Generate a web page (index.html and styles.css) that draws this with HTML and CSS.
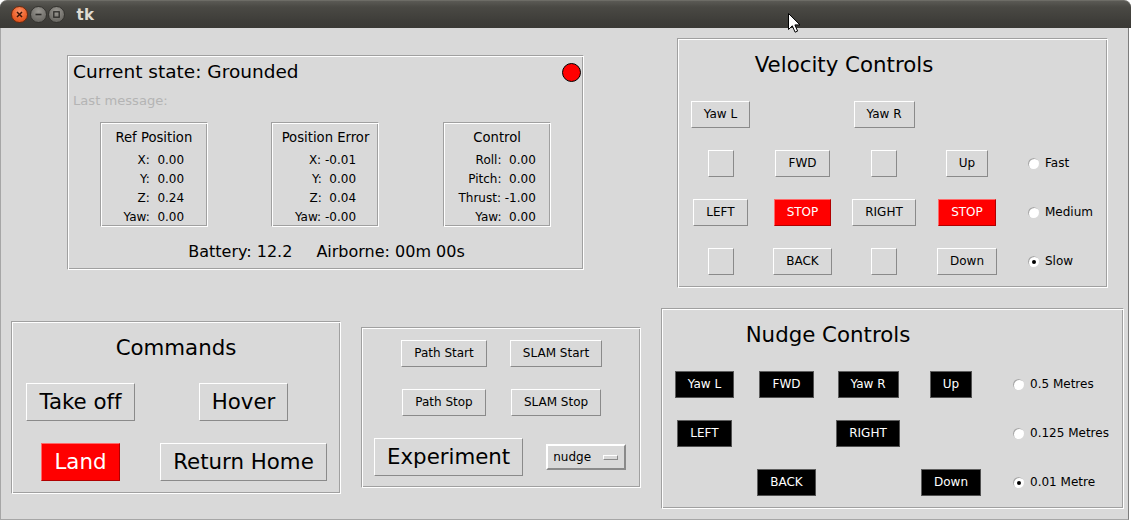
FILE: index.html
```html
<!DOCTYPE html>
<html>
<head>
<meta charset="utf-8">
<title>tk</title>
<link rel="stylesheet" href="styles.css">
</head>
<body>
<div class="titlebar">
  <div class="wbtn close"><svg width="9" height="9" viewBox="0 0 9 9"><path d="M2 2 L7 7 M7 2 L2 7" stroke="#3b1608" stroke-width="1.5" fill="none"/></svg></div>
  <div class="wbtn min"><svg width="9" height="9" viewBox="0 0 9 9"><path d="M1.5 4.5 H7.5" stroke="#2c2b28" stroke-width="1.6" fill="none"/></svg></div>
  <div class="wbtn max"><svg width="9" height="9" viewBox="0 0 9 9"><rect x="1.8" y="1.8" width="5.4" height="5.4" stroke="#2c2b28" stroke-width="1.3" fill="none"/></svg></div>
  <span class="title">tk</span>
</div>
<div class="window">
  <div class="left">
    <div class="frame state">
      <div class="state-head"><span class="state-text">Current state: Grounded</span><span class="dot"></span></div>
      <div class="lastmsg">Last message:</div>
      <div class="subs">
        <div class="frame sub">
          <div class="sub-title">Ref Position</div>
          <div class="rows"><div>X:  0.00</div><div>Y:  0.00</div><div>Z:  0.24</div><div>Yaw:  0.00</div></div>
        </div>
        <div class="frame sub">
          <div class="sub-title">Position Error</div>
          <div class="rows"><div>X: -0.01</div><div>Y:  0.00</div><div>Z:  0.04</div><div>Yaw: -0.00</div></div>
        </div>
        <div class="frame sub">
          <div class="sub-title">Control</div>
          <div class="rows"><div>Roll:  0.00</div><div>Pitch:  0.00</div><div>Thrust: -1.00</div><div>Yaw:  0.00</div></div>
        </div>
      </div>
      <div class="battery"><span>Battery: 12.2</span><span>Airborne: 00m 00s</span></div>
    </div>
    <div class="bottom-row">
      <div class="frame commands">
        <div class="cmd-title">Commands</div>
        <button class="btn big">Take off</button>
        <button class="btn big">Hover</button>
        <button class="btn big red">Land</button>
        <button class="btn big">Return Home</button>
      </div>
      <div class="frame path">
        <div class="path-grid">
          <button class="btn">Path Start</button>
          <button class="btn">SLAM Start</button>
          <button class="btn">Path Stop</button>
          <button class="btn">SLAM Stop</button>
        </div>
        <div class="path-row">
          <button class="btn big">Experiment</button>
          <div class="optmenu"><span>nudge</span><span class="optind"></span></div>
        </div>
      </div>
    </div>
  </div>
  <div class="right">
    <div class="frame ctrl velocity">
      <div class="ctrl-title">Velocity Controls</div><span></span>
      <button class="btn">Yaw L</button><span></span><button class="btn">Yaw R</button><span></span><span></span>
      <button class="btn empty"></button><button class="btn">FWD</button><button class="btn empty"></button><button class="btn">Up</button>
      <div class="radio"><span class="ind"></span>Fast</div>
      <button class="btn">LEFT</button><button class="btn red">STOP</button><button class="btn">RIGHT</button><button class="btn red">STOP</button>
      <div class="radio"><span class="ind"></span>Medium</div>
      <button class="btn empty"></button><button class="btn">BACK</button><button class="btn empty"></button><button class="btn">Down</button>
      <div class="radio"><span class="ind on"></span>Slow</div>
    </div>
    <div class="frame ctrl nudge">
      <div class="ctrl-title">Nudge Controls</div><span></span>
      <button class="btn black">Yaw L</button><button class="btn black">FWD</button><button class="btn black">Yaw R</button><button class="btn black">Up</button>
      <div class="radio"><span class="ind"></span>0.5 Metres</div>
      <button class="btn black">LEFT</button><span></span><button class="btn black">RIGHT</button><span></span>
      <div class="radio"><span class="ind"></span>0.125 Metres</div>
      <span></span><button class="btn black">BACK</button><span></span><button class="btn black">Down</button>
      <div class="radio"><span class="ind on"></span>0.01 Metre</div>
    </div>
  </div>
</div>
<svg class="cursor" width="14" height="21" viewBox="0 0 14 21"><path d="M0.5 0.5 L0.5 16.5 L4.3 12.8 L7.1 19.2 L9.6 18.1 L6.9 11.9 L12 11.9 Z" fill="#fff" stroke="#000" stroke-width="1"/></svg>
</body>
</html>
```

FILE: styles.css
```css
* { box-sizing: border-box; }

body {
  margin: 0;
  width: 1135px;
  height: 520px;
  overflow: hidden;
  position: relative;
  background: #ffffff;
  font-family: "DejaVu Sans", "Liberation Sans", sans-serif;
  font-variant-ligatures: none;
  color: #000;
}

.titlebar {
  width: 1131px;
  height: 28px;
  background: linear-gradient(#5b5a55 0px, #4a4944 6px, #3e3d39 20px, #3a3935 28px);
  border-top: 1px solid #6d6c66;
  border-radius: 7px 7px 0 0;
  display: flex;
  align-items: center;
  padding-left: 11px;
}

.wbtn {
  width: 17px;
  height: 17px;
  border-radius: 50%;
  margin-right: 1.5px;
  display: flex;
  align-items: center;
  justify-content: center;
}

.wbtn.close {
  background: radial-gradient(circle at 50% 30%, #f9926a 0%, #ef6a35 45%, #d9460f 100%);
  border: 1px solid #6e2a0e;
}

.wbtn.min, .wbtn.max {
  background: radial-gradient(circle at 50% 30%, #9a9892 0%, #7a7873 50%, #5d5c57 100%);
  border: 1px solid #34332f;
}

.title {
  margin-left: 10px;
  color: #dfdbd2;
  font-weight: bold;
  font-size: 15px;
  letter-spacing: 0.3px;
}

.window {
  width: 1129px;
  height: 492px;
  background: #d9d9d9;
  border-left: 1px solid #a6a6a6;
  border-right: 1px solid #7d7d7d;
  border-bottom: 1px solid #a6a6a6;
  display: flex;
}

.left {
  width: 660px;
  display: flex;
  flex-direction: column;
}

.right {
  display: flex;
  flex-direction: column;
}

.frame {
  border: 1px solid;
  border-color: #a0a0a0 #ffffff #ffffff #a0a0a0;
  box-shadow: inset 1px 1px 0 #ffffff, inset -1px -1px 0 #a0a0a0;
}

/* state frame */
.state {
  margin: 27px 0 0 66px;
  width: 517px;
  height: 215px;
  display: flex;
  flex-direction: column;
}

.state-head {
  display: flex;
  justify-content: space-between;
  align-items: center;
  padding: 5px 2px 0 5px;
  height: 27px;
}

.state-text {
  font-size: 18.5px;
  line-height: 22px;
}

.dot {
  width: 19px;
  height: 19px;
  border-radius: 50%;
  background: #ff0000;
  border: 1px solid #000;
}

.lastmsg {
  margin-top: 10px;
  padding-left: 5px;
  font-size: 13.1px;
  line-height: 16px;
  color: #b4b4b4;
}

.subs {
  margin-top: 13px;
  display: flex;
  justify-content: space-around;
}

.sub {
  width: 108px;
  height: 105px;
  display: flex;
  flex-direction: column;
  align-items: center;
  padding-top: 5px;
}

.sub-title {
  font-size: 13.2px;
  line-height: 19px;
}

.rows {
  margin-top: 4px;
  font-size: 12px;
  line-height: 19px;
  text-align: right;
  white-space: pre;
}

.battery {
  margin-top: 15px;
  display: flex;
  justify-content: center;
  gap: 24px;
  font-size: 16px;
  line-height: 20px;
  padding-left: 2px;
}

/* buttons */
.btn {
  margin: 0;
  font-family: "DejaVu Sans", "Liberation Sans", sans-serif;
  font-variant-ligatures: none;
  font-size: 12px;
  line-height: 15px;
  padding: 5px 12px;
  background: #d9d9d9;
  color: #000;
  border: 1px solid;
  border-color: #ffffff #8a8a8a #8a8a8a #ffffff;
  border-radius: 0;
  white-space: nowrap;
}

.btn.empty {
  width: 26px;
  height: 27px;
  padding: 0;
}

.btn.big {
  font-size: 21.33px;
  line-height: 26px;
  padding: 5px 12px;
}

.btn.red {
  background: #ff0000;
  color: #ffffff;
  border-color: #ff6a6a #b00000 #b00000 #ff6a6a;
}

.btn.black {
  background: #000000;
  color: #ffffff;
  border-color: #5e5e5e #505050 #505050 #5e5e5e;
}

/* bottom row */
.bottom-row {
  display: flex;
  align-items: center;
  margin-top: 51px;
}

.commands {
  margin-left: 10px;
  width: 330px;
  height: 173px;
  display: grid;
  grid-template-columns: 137px 189px;
  grid-template-rows: 50px 60px 60px;
  align-items: center;
  justify-items: center;
}

.cmd-title {
  grid-column: 1 / 3;
  font-size: 21.33px;
  line-height: 28px;
  padding-left: 2px;
  margin-top: 1px;
}

.path {
  margin-left: 20px;
  width: 280px;
  height: 161px;
  padding-top: 12px;
}

.path-grid {
  margin-left: 26px;
  display: grid;
  grid-template-columns: 112px 112px;
  row-gap: 22px;
  justify-items: center;
}

.path-row {
  margin-top: 22px;
  margin-left: 12px;
  display: flex;
  align-items: center;
  gap: 23px;
}

.optmenu {
  width: 80px;
  height: 26px;
  border: 2px solid;
  border-color: #ffffff #8a8a8a #8a8a8a #ffffff;
  display: flex;
  align-items: center;
  padding-left: 5px;
  font-size: 12px;
  line-height: 14px;
}

.optind {
  width: 15px;
  height: 5px;
  margin-left: 12px;
  border: 1px solid;
  border-color: #ffffff #8a8a8a #8a8a8a #ffffff;
  background: #d9d9d9;
}

/* control grids */
.ctrl {
  display: grid;
  grid-template-columns: 83px 81px 82px 84px 1fr;
  grid-template-rows: 51px;
  grid-auto-rows: 49px;
  align-items: center;
  justify-items: center;
  padding-left: 1px;
}

.ctrl-title {
  grid-column: 1 / 5;
  font-size: 21.33px;
  line-height: 26px;
}

.velocity {
  margin: 10px 0 0 16px;
  width: 431px;
  height: 250px;
}

.velocity .radio {
  padding-left: 19px;
}

.nudge {
  margin-top: 20px;
  width: 463px;
  height: 201px;
}

.nudge .radio {
  padding-left: 20px;
}

.radio {
  justify-self: start;
  display: flex;
  align-items: center;
  gap: 6px;
  font-size: 12px;
  line-height: 15px;
  white-space: nowrap;
}

.ind {
  width: 11px;
  height: 11px;
  border-radius: 50%;
  background: #ffffff;
  box-shadow: inset 1px 1px 0 #a8a8a8;
  display: flex;
  align-items: center;
  justify-content: center;
}

.ind.on::after {
  content: "";
  width: 4px;
  height: 4px;
  border-radius: 50%;
  background: #000;
}

.cursor {
  position: absolute;
  left: 788px;
  top: 13px;
}
```
